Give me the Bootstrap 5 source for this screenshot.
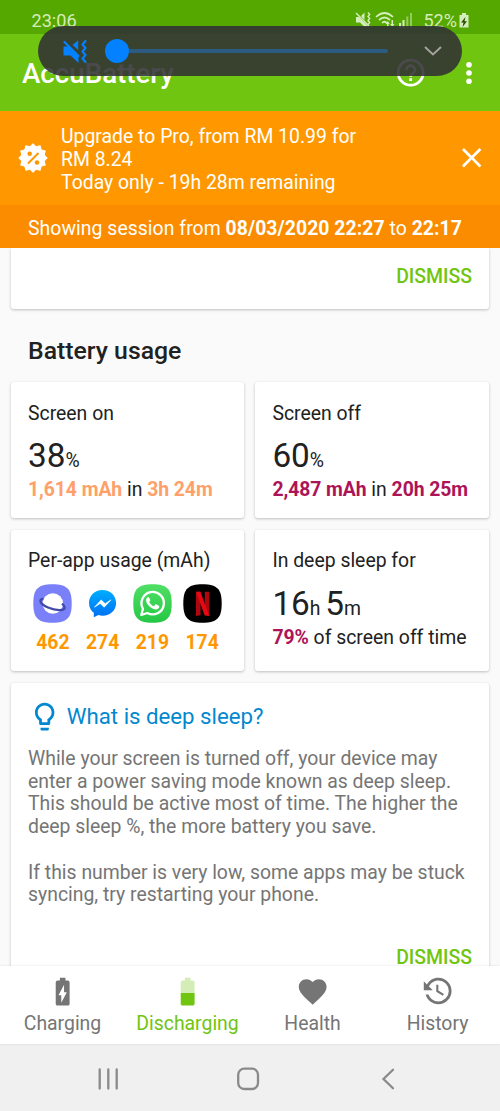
<!DOCTYPE html>
<html lang="en">
<head>
<meta charset="utf-8">
<meta name="viewport" content="width=device-width, initial-scale=1">
<title>AccuBattery</title>
<link href="https://cdn.jsdelivr.net/npm/bootstrap@5.3.0/dist/css/bootstrap.min.css" rel="stylesheet">
<style>
  body { font-family: Roboto, sans-serif; font-size: 19.4px; line-height: 22.78px; color: #212121; background: #fafafa; }
  .screen { width: 500px; height: 1111px; }
  svg { display: block; flex: none; }
  .ic { width: 33.33px; height: 33.33px; fill: currentColor; }
  .med { font-weight: 500; }
  .status { height: 34px; background: #55a800; color: #d5ecbb; padding: 11px 31px 0 31.5px; font-size: 18.1px; line-height: 20px; }
  .appbar { height: 77px; background: #70c510; padding: 0 14px 0 22px; }
  .appbar h1 { font-size: 27.7px; line-height: 32px; padding-top: 3px; }
  .volume { left: 38px; top: 26px; width: 424px; height: 50px; background: rgba(49,48,51,.88); padding: 0 19px 0 24px; }
  .knob { width: 24px; height: 24px; background: #0381fe; }
  .track { height: 4px; background: #2b5b80; }
  .promo { height: 94px; background: #ff9800; padding: 0 11.5px 0 18px; }
  .session { height: 43px; background: #fb8c00; padding: 5px 0 0 28px; letter-spacing: .05px; }
  .tile { background: #fff; border-radius: 3px; box-shadow: 0 1px 3px rgba(0,0,0,.24); padding: 20.6px 17px 15px; }
  .tile b { letter-spacing: -.07px; }
  .tile-top { height: 61px; border-radius: 0 0 3px 3px; padding-top: 18.2px; }
  .content { padding: 0 11px; }
  .content h2 { font-size: 24.8px; line-height: 29.3px; margin: 26.5px 17px 17.2px; }
  .stats { display: grid; grid-template-columns: 233px 234px; gap: 11.6px 11.4px; grid-template-rows: 136px 141px; }
  .big { font-size: 33.3px; line-height: 39px; margin: 10.6px 0 4px; }
  .big span { font-size: 19.4px; line-height: 1; }
  .green { color: #70c510; }
  .peach { color: #ffa06b; }
  .plum { color: #ad1457; }
  .apps { margin: 11.3px 0 0; }
  .apps > div { width: 50px; color: #ff9800; }
  .apps svg { width: 39px; height: 39px; margin-bottom: 8.5px; }
  .tip { margin-top: 12px; height: 300px; color: #757575; }
  .tip h3 { color: #0288d1; font-size: 22.22px; line-height: 26px; margin-bottom: 18.6px; }
  .tip h3 svg { margin: -4px 6px -4px -.5px; }
  .tabs { height: 78px; background: #fff; color: #757575; padding-top: 9.3px; box-shadow: 0 0 2px rgba(0,0,0,.12); }
  .tabs .ic { margin-bottom: 4.4px; }
  .sysnav { height: 67px; background: #f0f0f0; padding: 3px 97px 0 94px; }
</style>
</head>
<body>
<div class="screen position-relative d-flex flex-column overflow-hidden">
  <div class="status d-flex justify-content-between flex-shrink-0">
    <span>23:06</span>
    <div class="d-flex">
      <svg width="68" height="18" viewBox="356 12 68 18" fill="#d5ecbb">
        <path d="M357 18h3l10 10V28l-5-.5-4-4h-4zM362 17l3.5-3.5V21z"/>
        <g fill="none" stroke="#d5ecbb" stroke-width="1.4"><path d="M357 14l13 13"/><path d="M369 13.500l1.700 2-1.700 2 1.700 2-1.700 2 1.700 2-1.700 2"/>
        <g stroke-width="1.7"><path d="M377 18q8.500-8 17 0M380 21q5.500-5 11 0M383 24q2.500-2.500 5 0"/></g></g>
        <path d="M388 28v-3h-1.500l2.200-3 2.200 3h-1.400v3zM394 21v4h1.500l-2.200 3-2.200-3h1.400v-4zM400 24h2v5h-2zM403.500 21h2v8h-2z"/>
        <path opacity=".5" d="M407.300 17.500h2V29h-2zM411 14h2v15h-2z"/>
      </svg>
      <span>52%</span>
      <svg style="margin-left:2px" width="10" height="18" viewBox="0 0 10 18"><path fill="#d5ecbb" d="M3 2h4v2h2.500v12.500H.5V4H3z"/><path fill="#294e08" d="M6.500 6L2 11.500h2.500L3.500 16 8 10.300H5.500z"/></svg>
    </div>
  </div>

  <header class="appbar d-flex align-items-center justify-content-between flex-shrink-0 text-white">
    <h1 class="med mb-0">AccuBattery</h1>
    <div class="d-flex">
      <svg class="ic" viewBox="0 0 24 24" style="margin-right:25px"><path d="M11 18h2v-2h-2v2zm1-16C6.480 2 2 6.480 2 12s4.480 10 10 10 10-4.480 10-10S17.520 2 12 2zm0 18c-4.410 0-8-3.590-8-8s3.590-8 8-8 8 3.590 8 8-3.590 8-8 8zm0-14c-2.210 0-4 1.790-4 4h2c0-1.100.9-2 2-2s2 .9 2 2c0 2-3 1.750-3 5h2c0-2.250 3-2.500 3-5 0-2.210-1.790-4-4-4z"/></svg>
      <svg width="34" height="34" viewBox="0 0 34 34" fill="currentColor"><circle cx="17" cy="8.700" r="2.800"/><circle cx="17" cy="17" r="2.800"/><circle cx="17" cy="25.300" r="2.800"/></svg>
    </div>
  </header>

  <div class="volume position-absolute rounded-pill d-flex align-items-center">
    <svg width="26" height="26" viewBox="62 38 26 26">
      <path fill="#0381fe" d="M63.500 46.500h6L78.500 55v8l-8-7.500h-7zM72.500 45l5.700-4.800V50z"/>
      <g fill="none" stroke="#0381fe" stroke-width="2.200" stroke-linecap="round" stroke-linejoin="round"><path d="M64.500 42l14 14"/><path d="M85.500 41l-3 3.500 3 3.500-3 3.500 3 3.500-3 3.500 3 3.500"/></g>
    </svg>
    <div class="knob rounded-circle flex-shrink-0" style="margin-left:17px"></div>
    <div class="track flex-grow-1 rounded-end"></div>
    <svg width="20" height="14" viewBox="0 0 20 14" style="margin-left:35px" fill="none" stroke="#a3a3a0" stroke-width="2"><path d="M2 3l8 7.500L18 3"/></svg>
  </div>

  <div class="promo d-flex align-items-center flex-shrink-0 text-white">
    <svg width="30" height="30" viewBox="-15 -15 30 30"><g fill="#fff" stroke="#fff" stroke-linejoin="round"><rect x="-10" y="-10" width="20" height="20" transform="rotate(45)"/><rect x="-10" y="-10" width="20" height="20" transform="rotate(15)"/><rect x="-10" y="-10" width="20" height="20" transform="rotate(75)"/></g><path d="M-5 5.500L5.500-5" stroke="#ff9800" stroke-width="2"/><circle cx="-3.300" cy="-4.300" r="2.300" fill="#ff9800"/><circle cx="4" cy="4.500" r="2.300" fill="#ff9800"/></svg>
    <div class="flex-grow-1" style="padding:5px 0 0 13px">Upgrade to Pro, from RM 10.99 for<br>RM 8.24<br>Today only - 19h 28m remaining</div>
    <svg class="ic" viewBox="0 0 24 24"><path d="M19 6.410L17.590 5 12 10.590 6.410 5 5 6.410 10.590 12 5 17.590 6.410 19 12 13.410 17.590 19 19 17.590 13.410 12z"/></svg>
  </div>
  <div class="session d-flex align-items-center flex-shrink-0 text-white"><div>Showing session from <b>08/03/2020 22:27</b> to <b>22:17</b></div></div>

  <main class="content flex-grow-1 overflow-hidden">
    <section class="tile tile-top text-end med green">DISMISS</section>
    <h2 class="med">Battery usage</h2>
    <div class="stats">
      <section class="tile">
        <div>Screen on</div>
        <div class="big">38<span>%</span></div>
        <div><b class="peach">1,614 mAh</b> in <b class="peach">3h 24m</b></div>
      </section>
      <section class="tile">
        <div>Screen off</div>
        <div class="big">60<span>%</span></div>
        <div class="text-nowrap"><b class="plum">2,487 mAh</b> in <b class="plum">20h 25m</b></div>
      </section>
      <section class="tile">
        <div>Per-app usage (mAh)</div>
        <div class="apps d-flex fw-bold">
          <div class="d-flex flex-column align-items-center">
            <svg viewBox="0 0 39 39"><path fill="#7a80f8" d="M19.500.3C34 .3 38.700 5 38.700 19.500S34 38.700 19.500 38.700.3 34 .3 19.500 5 .3 19.500.3z"/><circle cx="19.800" cy="19.500" r="10.300" fill="#fff"/><path d="M10.500 15C5 15 7 20 15 23.500s18 3.500 16.500-.5c-.5-1.300-1.500-2.500-2.500-3.300" fill="none" stroke="#414aa8" stroke-width="2.300"/></svg>462
          </div>
          <div class="d-flex flex-column align-items-center">
            <svg viewBox="0 0 39 39"><defs><linearGradient id="chat" x2="0" y2="1"><stop stop-color="#00aefd"/><stop offset="1" stop-color="#006ff5"/></linearGradient></defs><path fill="url(#chat)" d="M19.500 6C11.500 6 6 11.800 6 19c0 4.200 1.700 7.500 4.800 9.800v4.500l4.600-2.200c1.300.4 2.700.6 4.100.6 8 0 13.600-5.600 13.600-12.700S27.500 6 19.500 6z"/><path fill="#fff" d="M11.500 23.200l6.700-7.300 4 3.800 5.700-3.800-6.700 7.300-4-3.800z" stroke="#fff" stroke-width=".7" stroke-linejoin="round"/></svg>274
          </div>
          <div class="d-flex flex-column align-items-center">
            <svg viewBox="0 0 39 39"><defs><linearGradient id="call" x2="0" y2="1"><stop stop-color="#50df65"/><stop offset="1" stop-color="#25c744"/></linearGradient></defs><path fill="url(#call)" d="M19.500.3C34 .3 38.700 5 38.700 19.500S34 38.700 19.500 38.700.3 34 .3 19.500 5 .3 19.500.3z"/><path d="M8.300 31l1.700-6.200A11.200 11.200 0 1 1 14.300 29z" fill="none" stroke="#fff" stroke-width="2.300" stroke-linejoin="round"/><path fill="#fff" d="M15.300 13c-.8 0-2.200 1.300-2.200 3.300 0 4 5.400 9.200 9.800 9.200 1.900 0 3.500-1.300 3.500-3.200 0-.5-3.300-2.100-3.700-2-.5.100-1.400 1.800-1.900 1.800-1 0-4.500-3-4.500-4.200 0-.5 1.200-1.200 1-1.900-.2-.6-1.200-3-2-3z"/></svg>219
          </div>
          <div class="d-flex flex-column align-items-center">
            <svg viewBox="0 0 39 39"><path fill="#000" d="M19.500.3C34 .3 38.700 5 38.700 19.500S34 38.700 19.500 38.700.3 34 .3 19.500 5 .3 19.500.3z"/><path fill="#b1060f" d="M13 7.800h4.500v23.500l-4.500.6zM21.800 7.800h4.400v24.100l-4.400-.6z"/><path fill="#e50914" d="M13 7.800h4.500l8.700 24.100-4.600-.6z"/></svg>174
          </div>
        </div>
      </section>
      <section class="tile">
        <div>In deep sleep for</div>
        <div class="big">16<span>h </span>5<span>m</span></div>
        <div class="text-nowrap"><b class="plum">79%</b> of screen off time</div>
      </section>
    </div>
    <section class="tile tip">
      <h3 class="d-flex align-items-center fw-normal"><svg class="ic" viewBox="0 0 24 24"><path d="M12 2C8.140 2 5 5.140 5 9c0 2.380 1.190 4.470 3 5.740V17c0 .55.45 1 1 1h6c.55 0 1-.45 1-1v-2.260c1.810-1.270 3-3.360 3-5.740 0-3.860-3.140-7-7-7zm2.850 11.100l-.85.6V16h-4v-2.300l-.85-.6C7.800 12.160 7 10.630 7 9c0-2.760 2.240-5 5-5s5 2.240 5 5c0 1.630-.8 3.160-2.150 4.100zM9 20h6v1q0 1-1 1h-4q-1 0-1-1z"/></svg>What is deep sleep?</h3>
      <div class="text-nowrap">While your screen is turned off, your device may<br>enter a power saving mode known as deep sleep.<br>This should be active most of time. The higher the<br>deep sleep %, the more battery you save.<br><br>If this number is very low, some apps may be stuck<br>syncing, try restarting your phone.</div>
      <div class="text-end med green" style="margin-top:39.500px">DISMISS</div>
    </section>
  </main>

  <nav class="tabs d-flex flex-shrink-0 position-relative">
    <div class="w-25 d-flex flex-column align-items-center"><svg class="ic" viewBox="0 0 24 24"><path d="M15.670 4H14V2h-4v2H8.330C7.600 4 7 4.600 7 5.330v15.330C7 21.400 7.600 22 8.330 22h7.330c.74 0 1.340-.6 1.340-1.330V5.330C17 4.600 16.400 4 15.670 4zM11 20v-5.500H9L13 7v5.500h2L11 20z"/></svg>Charging</div>
    <div class="w-25 d-flex flex-column align-items-center green"><svg class="ic" viewBox="0 0 24 24"><path fill-opacity=".3" d="M17 5.330C17 4.600 16.400 4 15.670 4H14V2h-4v2H8.330C7.600 4 7 4.600 7 5.330V13h10z"/><path d="M7 13v7.670C7 21.400 7.600 22 8.330 22h7.330c.74 0 1.340-.6 1.340-1.330V13z"/></svg>Discharging</div>
    <div class="w-25 d-flex flex-column align-items-center"><svg class="ic" viewBox="0 0 24 24"><path d="M12 21.350l-1.450-1.320C5.400 15.360 2 12.280 2 8.500 2 5.420 4.420 3 7.500 3c1.740 0 3.410.81 4.500 2.090C13.090 3.810 14.760 3 16.500 3 19.580 3 22 5.420 22 8.500c0 3.780-3.400 6.860-8.550 11.540L12 21.350z"/></svg>Health</div>
    <div class="w-25 d-flex flex-column align-items-center"><svg class="ic" viewBox="0 0 24 24"><path d="M11 7v5.110l4.710 2.790.79-1.280-4-2.370V7zM12.500 2C8.970 2 5.910 3.920 4.270 6.770L2 4.500V11h6.500L5.750 8.250C6.960 5.730 9.500 4 12.500 4a7.500 7.500 0 0 1 0 15c-3.270 0-6.030-2.090-7.060-5h-2.100c1.100 4.030 4.770 7 9.160 7 5.240 0 9.500-4.250 9.500-9.500A9.500 9.500 0 0 0 12.500 2z"/></svg>History</div>
  </nav>
  <div class="sysnav d-flex align-items-center justify-content-between flex-shrink-0">
    <svg width="28" height="28" viewBox="94 1065.500 28 28" fill="none" stroke="#8a8a8a" stroke-width="2.300" stroke-linecap="round"><path d="M99.700 1070v19M108.300 1070v19M116.700 1070v19"/></svg>
    <svg width="28" height="28" viewBox="235 1065.500 28 28" fill="none" stroke="#8a8a8a" stroke-width="2.300"><rect x="238.200" y="1069.200" width="19.800" height="20.300" rx="6"/></svg>
    <svg width="28" height="28" viewBox="375 1065.500 28 28" fill="none" stroke="#8a8a8a" stroke-width="2.300" stroke-linecap="round"><path d="M393 1070.200l-9.500 9.300 9.500 9.300"/></svg>
  </div>
</div>
<script src="https://cdn.jsdelivr.net/npm/bootstrap@5.3.0/dist/js/bootstrap.bundle.min.js"></script>
</body>
</html>
